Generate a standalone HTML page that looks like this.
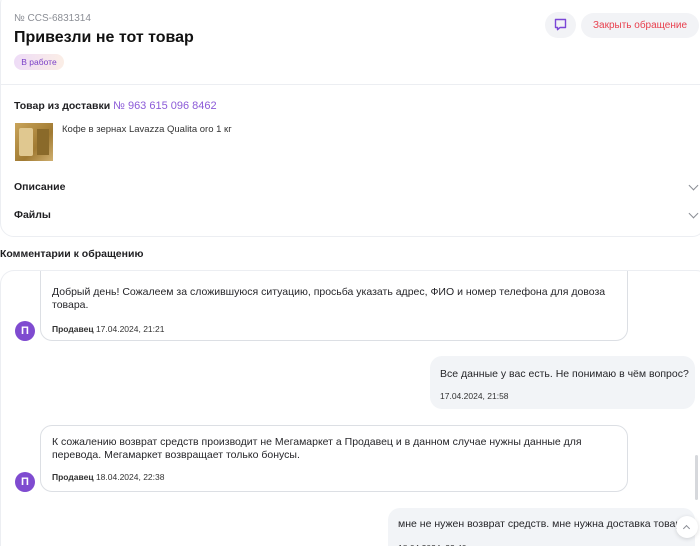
<!DOCTYPE html>
<html><head><meta charset="utf-8"><style>
*{box-sizing:border-box;margin:0;padding:0}
html,body{width:700px;height:560px;overflow:hidden}
body{background:#fff;font-family:"Liberation Sans","Noto Sans CJK SC",sans-serif;color:#1f1f22;position:relative}
.a{position:absolute}
.card{left:0;top:-10px;width:706px;height:247px;border:1px solid #eceef2;border-radius:14px}
.line{left:0;width:700px;height:1px;background:#eceef2}
.bub{position:absolute;font-size:10.5px;line-height:13px;color:#26262a;white-space:nowrap}
.in{background:#fff;border:1px solid #dcdfe4;border-radius:12px}
.out{background:#f2f4f7;border-radius:12px}
.meta{font-size:8.5px;color:#333}
.av{position:absolute;width:20px;height:20px;border-radius:50%;background:#7f4bd0;color:#fff;font-size:11px;font-weight:bold;text-align:center;line-height:20px}
.chev{position:absolute;width:7px;height:7px;border-right:1px solid #8a8d94;border-bottom:1px solid #8a8d94;transform:rotate(45deg)}
</style></head><body>
<div class="a card"></div>
<div class="a" style="left:14px;top:13px;font-size:10px;color:#8b8e95">№ CCS-6831314</div>
<div class="a" style="left:14px;top:29px;font-size:16px;font-weight:bold;color:#111">Привезли не тот товар</div>
<div class="a" style="left:14px;top:54px;width:50px;height:16px;border-radius:8px;background:linear-gradient(90deg,#eedcf7,#fbeee6);font-size:8.5px;color:#7a3fc7;text-align:center;line-height:16px">В работе</div>
<div class="a" style="left:545px;top:12px;width:31px;height:26px;border-radius:13px;background:#f2f3f6"></div>
<svg class="a" style="left:553px;top:17px" width="15" height="15" viewBox="0 0 15 15"><path d="M2.5 2.5h10v8h-5.5l-2.5 2.2v-2.2h-2z" fill="none" stroke="#7b47d6" stroke-width="1.4" stroke-linejoin="round"/></svg>
<div class="a" style="left:581px;top:13px;width:118px;height:25px;border-radius:13px;background:#f2f3f6;color:#e8404e;font-size:10px;text-align:center;line-height:25px">Закрыть обращение</div>
<div class="a line" style="top:84px"></div>
<div class="a" style="left:14px;top:100px;font-size:10.5px;font-weight:bold">Товар из доставки <span style="font-weight:normal;color:#8c5bd8;font-size:11px">№ 963 615 096 8462</span></div>
<div class="a" style="left:15px;top:123px;width:38px;height:38px;background:linear-gradient(135deg,#c9a45a,#a07a32 60%,#d0b070)"><div style="position:absolute;left:4px;top:5px;width:14px;height:28px;background:#e0c890;border-radius:2px"></div><div style="position:absolute;left:22px;top:6px;width:12px;height:26px;background:#8a6a2a"></div></div>
<div class="a" style="left:62px;top:124px;font-size:9.5px;color:#333">Кофе в зернах Lavazza Qualita oro 1 кг</div>
<div class="a" style="left:14px;top:181px;font-size:10.5px;font-weight:bold">Описание</div>
<div class="a" style="left:14px;top:209px;font-size:10.5px;font-weight:bold">Файлы</div>
<div class="chev" style="left:690px;top:182px"></div>
<div class="chev" style="left:690px;top:210px"></div>
<div class="a" style="left:0;top:248px;font-size:10.5px;font-weight:bold">Комментарии к обращению</div>
<div class="a" style="left:0;top:270px;width:710px;height:290px;border:1px solid #eceef2;border-bottom:none;border-radius:14px 14px 0 0;overflow:hidden">
 <div class="bub in" style="left:39px;top:-20px;width:588px;height:90px;padding:34px 10px 0 11px">Добрый день! Сожалеем за сложившуюся ситуацию, просьба указать адрес, ФИО и номер телефона для довоза<br>товара.<div class="meta" style="margin-top:11px"><b>Продавец</b> 17.04.2024, 21:21</div></div>
 <div class="av" style="left:14px;top:50px">П</div>
 <div class="bub out" style="left:429px;top:85px;width:265px;height:53px;padding:12px 10px">Все данные у вас есть. Не понимаю в чём вопрос?<div class="meta" style="margin-top:9px">17.04.2024, 21:58</div></div>
 <div class="bub in" style="left:39px;top:154px;width:588px;height:67px;padding:10px 10px 0 11px">К сожалению возврат средств производит не Мегамаркет а Продавец и в данном случае нужны данные для<br>перевода. Мегамаркет возвращает только бонусы.<div class="meta" style="margin-top:9px"><b>Продавец</b> 18.04.2024, 22:38</div></div>
 <div class="av" style="left:14px;top:201px">П</div>
 <div class="bub out" style="left:387px;top:237px;width:307px;height:60px;padding:10px 10px;overflow:hidden">мне не нужен возврат средств. мне нужна доставка товар<div class="meta" style="margin-top:11px">18.04.2024, 22:40</div></div>
</div>
<div class="a" style="left:0;top:546px;width:700px;height:14px;background:#fff"></div>
<div class="a" style="left:695px;top:455px;width:3px;height:45px;border-radius:2px;background:#d6d8dc"></div>
<div class="a" style="left:676px;top:516px;width:22px;height:22px;border-radius:50%;background:#fff;box-shadow:0 1px 4px rgba(0,0,0,.15)"></div>
<div class="chev" style="left:684px;top:526px;transform:rotate(225deg);width:5px;height:5px"></div>
</body></html>
